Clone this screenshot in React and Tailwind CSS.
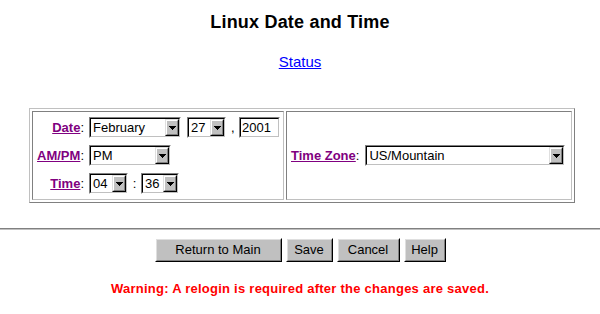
import React from 'react';

const font = { fontFamily: '"Liberation Sans", Arial, sans-serif' };

// little black down arrow, drawn pixel by pixel
const Arrow = () => (
  <svg width="7" height="4" viewBox="0 0 7 4" shapeRendering="crispEdges">
    <rect x="0" y="0" width="7" height="1" fill="#000" />
    <rect x="1" y="1" width="5" height="1" fill="#000" />
    <rect x="2" y="2" width="3" height="1" fill="#000" />
    <rect x="3" y="3" width="1" height="1" fill="#000" />
  </svg>
);

const Sunken = ({ className, children }) => (
  <div className={`h-[21px] border border-t-[#808080] border-l-[#808080] border-b-white border-r-white ${className}`}>
    <div className="h-full flex items-stretch bg-white border border-t-black border-l-black border-b-[#c0c0c0] border-r-[#c0c0c0]">
      {children}
    </div>
  </div>
);

const Select = ({ value, className }) => (
  <Sunken className={className}>
    <span className="flex-1 pl-[2px] text-[13px] leading-[17px] text-black whitespace-nowrap overflow-hidden">{value}</span>
    <div className="w-[14px] border border-t-[#dfdfdf] border-l-[#dfdfdf] border-b-black border-r-black">
      <div className="h-full flex items-center justify-center bg-[#c0c0c0] border border-t-white border-l-white border-b-[#808080] border-r-[#808080]">
        <Arrow />
      </div>
    </div>
  </Sunken>
);

const Label = ({ text, className }) => (
  <span className={`text-[13px] leading-[15px] whitespace-nowrap ${className}`}>
    <a href="#" className="font-bold underline text-[#800080]">{text}</a>
    <span className="text-black">:</span>
  </span>
);

const Button = ({ children, className }) => (
  <button className={`h-[24px] border border-t-white border-l-white border-b-black border-r-black ${className}`}>
    <div className="h-full flex items-center justify-center bg-[#c0c0c0] border border-t-[#dfdfdf] border-l-[#dfdfdf] border-b-[#808080] border-r-[#808080] text-[13px] text-black">
      {children}
    </div>
  </button>
);

export default function App() {
  return (
    <div className="w-[600px] h-[314px] bg-white overflow-hidden" style={font}>
      <h1 className="pt-[12px] text-center text-[18px] leading-[21px] font-bold tracking-[0.2px] text-black">Linux Date and Time</h1>

      <div className="mt-[20px] text-center text-[15px] leading-[17px]">
        <a href="#" className="underline text-[#0000ff]">Status</a>
      </div>

      {/* settings table */}
      <div className="mt-[38px] ml-[29px] w-[546px] h-[95px] p-[2px] flex gap-[2px] border border-t-[#c0c0c0] border-l-[#c0c0c0] border-b-[#808080] border-r-[#808080]">
        <div className="w-[252px] flex flex-col justify-center gap-[7px] border border-t-[#808080] border-l-[#808080] border-b-[#c0c0c0] border-r-[#c0c0c0]">
          <div className="flex items-center">
            <Label text="Date" className="w-[51px] text-right" />
            <Select value="February" className="ml-[5px] w-[92px]" />
            <Select value="27" className="ml-[6px] w-[39px]" />
            <span className="ml-[5px] w-[8px] text-[13px] text-black">,</span>
            <Sunken className="w-[41px]">
              <span className="pl-[1px] text-[13px] leading-[17px] text-black">2001</span>
            </Sunken>
          </div>
          <div className="flex items-center">
            <Label text="AM/PM" className="w-[51px] text-right" />
            <Select value="PM" className="ml-[5px] w-[82px]" />
          </div>
          <div className="flex items-center">
            <Label text="Time" className="w-[51px] text-right" />
            <Select value="04" className="ml-[5px] w-[39px]" />
            <span className="w-[13px] text-center text-[13px] text-black">:</span>
            <Select value="36" className="w-[38px]" />
          </div>
        </div>

        <div className="flex-1 flex items-center pl-[4px] border border-t-[#808080] border-l-[#808080] border-b-[#c0c0c0] border-r-[#c0c0c0]">
          <Label text="Time Zone" />
          <Select value="US/Mountain" className="ml-[6px] w-[200px]" />
        </div>
      </div>

      <div className="mt-[25px] h-[2px] border-t border-b border-t-[#808080] border-b-[#c0c0c0]" />

      <div className="mt-[8px] flex justify-center gap-[4px]">
        <Button className="w-[127px]">Return to Main</Button>
        <Button className="w-[47px]">Save</Button>
        <Button className="w-[63px]">Cancel</Button>
        <Button className="w-[42px]">Help</Button>
      </div>

      <p className="mt-[19px] text-center text-[13px] leading-[15px] font-bold tracking-[0.25px] text-[#ff0000]">
        Warning: A relogin is required after the changes are saved.
      </p>
    </div>
  );
}
